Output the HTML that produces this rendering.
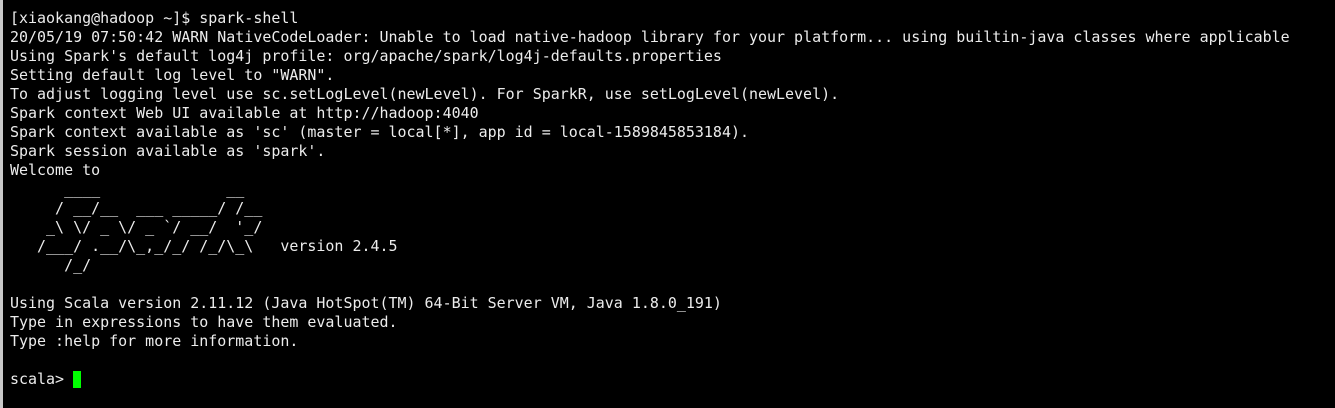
<!DOCTYPE html>
<html><head><style>
html,body{margin:0;padding:0;background:#000;width:1335px;height:408px;overflow:hidden}
body{position:relative}
.b{position:absolute;left:0;top:0;width:3px;height:408px;background:#c8c8c8}
pre{margin:0;position:absolute;left:10px;top:9px;font-family:"DejaVu Sans Mono","Liberation Mono",monospace;font-size:14.97px;line-height:19px;color:#ececec}
.c{display:inline-block;width:8px;height:17px;background:#00ff00;vertical-align:-4px}
</style></head><body><div class="b"></div><pre>[xiaokang@hadoop ~]$ spark-shell
20/05/19 07:50:42 WARN NativeCodeLoader: Unable to load native-hadoop library for your platform... using builtin-java classes where applicable
Using Spark's default log4j profile: org/apache/spark/log4j-defaults.properties
Setting default log level to "WARN".
To adjust logging level use sc.setLogLevel(newLevel). For SparkR, use setLogLevel(newLevel).
Spark context Web UI available at http://hadoop:4040
Spark context available as 'sc' (master = local[*], app id = local-1589845853184).
Spark session available as 'spark'.
Welcome to
      ____              __
     / __/__  ___ _____/ /__
    _\ \/ _ \/ _ `/ __/  '_/
   /___/ .__/\_,_/_/ /_/\_\   version 2.4.5
      /_/
         
Using Scala version 2.11.12 (Java HotSpot(TM) 64-Bit Server VM, Java 1.8.0_191)
Type in expressions to have them evaluated.
Type :help for more information.

scala> <span class="c"></span></pre></body></html>
